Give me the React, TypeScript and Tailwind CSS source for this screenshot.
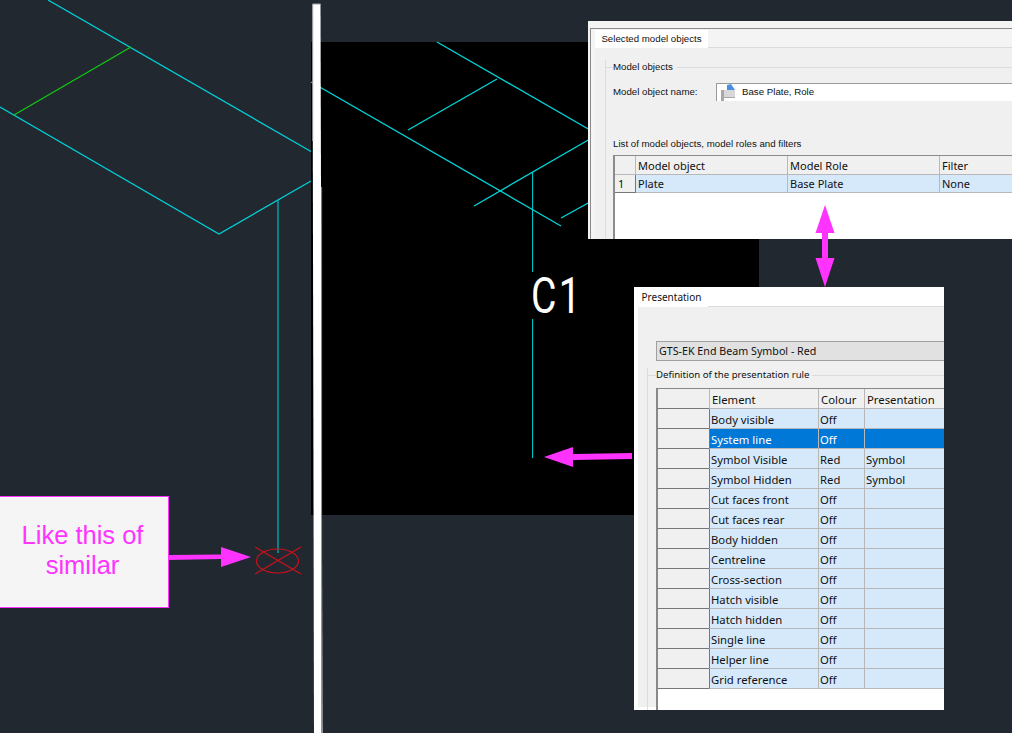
const magenta = "#ff33ff"

const presentationRows = [
  ["Body visible", "Off", ""],
  ["System line", "Off", ""],
  ["Symbol Visible", "Red", "Symbol"],
  ["Symbol Hidden", "Red", "Symbol"],
  ["Cut faces front", "Off", ""],
  ["Cut faces rear", "Off", ""],
  ["Body hidden", "Off", ""],
  ["Centreline", "Off", ""],
  ["Cross-section", "Off", ""],
  ["Hatch visible", "Off", ""],
  ["Hatch hidden", "Off", ""],
  ["Single line", "Off", ""],
  ["Helper line", "Off", ""],
  ["Grid reference", "Off", ""],
]

function LeftDrawing() {
  return (
    <svg className="absolute left-0 top-0" width={1012} height={733} fill="none">
      <g stroke="#00d0d8" strokeWidth={1.3}>
        <path d="M48 0L311 151.5" />
        <path d="M0 107L219 234L311 181" />
        <path d="M278 200V553" stroke="#00b0b8" />
      </g>
      <path d="M14 115L131 47" stroke="#12c812" strokeWidth={1.3} />
      <g stroke="#d0101a" strokeWidth={1.1}>
        <ellipse cx={277.5} cy={561} rx={21} ry={12} />
        <path d="M255 547L301 574M301 547L255 574" />
      </g>
    </svg>
  )
}

function BlackDrawing() {
  return (
    <svg className="absolute left-0 top-0" width={1012} height={733} fill="none">
      <rect x={311} y={42} width={448} height={473} fill="#000" />
      <g stroke="#00d8dc" strokeWidth={1.3}>
        <path d="M437 42L590 130" />
        <path d="M408 130L497 79" />
        <path d="M311 82L561 226" />
        <path d="M474 206L590 139" />
        <path d="M561 218L590 202" />
      </g>
      <path d="M532.6 172V272M532.6 319V458" stroke="#00d8dc" />
      <polygon points="312.5,4 320.5,4 322.5,733 314,733" fill="#fff" />
      <path d="M312.7 4H320.5M312.7 4V141" stroke="#a0a0a0" />
      <path d="M321.6 187V733" stroke="#8a8a8a" />
    </svg>
  )
}

function Arrows() {
  return (
    <svg className="absolute left-0 top-0" width={1012} height={733} fill={magenta}>
      <polygon points="168,555 221,554.5 221,547 251,557 221,567 221,559 168,560" />
      <polygon points="632,453 573,454 573,447 544,457 573,467 573,460 632,459" />
      <polygon points="825,205 834.5,233 828,233 828,258 834.5,258 825,287 815.5,258 822,258 822,233 815.5,233" />
    </svg>
  )
}

function PlateIcon() {
  return (
    <svg width={16} height={17} viewBox="0 0 16 17" className="shrink-0">
      <path d="M1 6H15V14H4V17H1Z" fill="#a8a8a8" />
      <path d="M4 6H15V13H4Z" fill="#d8d8d8" />
      <path d="M7 1L11 0L15 6H7Z" fill="#4a90e2" />
    </svg>
  )
}

function SelectedObjectsWindow() {
  return (
    <div className="absolute left-[588px] top-[21px] h-[218px] w-[424px] overflow-hidden bg-[#f4f4f4] pl-[2px] pt-[7px] font-['Liberation_Sans',sans-serif] text-[9.7px] text-[#111]">
      <div className="h-[400px] border-l border-t border-[#8a8a8a] pl-[4px] pt-[1px]">
        <div className="flex h-[18px] border-b border-[#dcdcdc]">
          <div className="flex h-[18px] w-[113px] items-center justify-center whitespace-nowrap bg-white">Selected model objects</div>
        </div>
        <div className="h-[400px] bg-[#f0f0f0] pl-[10px] pt-[19px]">
          <div className="h-[400px] border-l border-[#dcdcdc]">
            <div className="-mt-[7px] flex h-[14px] items-center">
              <span className="h-px w-[7px] bg-[#dcdcdc]" />
              <span className="pt-[1px]">Model objects</span>
              <span className="ml-[4px] h-px flex-1 bg-[#dcdcdc]" />
            </div>
            <div className="ml-[7px] mt-[9px] flex h-[18px] items-center">
              <span className="w-[103px] whitespace-nowrap">Model object name:</span>
              <div className="flex h-[18px] flex-1 items-center gap-[6px] border-l border-t border-[#9a9a9a] bg-white pl-[3px]">
                <PlateIcon />
                <span>Base Plate, Role</span>
              </div>
            </div>
            <div className="ml-[7px] mt-[35px] h-[14px] pt-[1px] leading-[14px]">List of model objects, model roles and filters</div>
            <div className="ml-[7px] mt-[5px] h-[200px] border-l-2 border-t border-[#8c8c8c] bg-white font-['Noto_Sans',sans-serif] text-[11px]">
              <div className="flex h-[19px] bg-[#f0f0f0] leading-[20px]">
                <div className="w-[21px] border-b border-r border-[#b8b8b8]" />
                <div className="w-[152px] border-b border-r border-[#b8b8b8] pl-[2px]">Model object</div>
                <div className="w-[152px] border-b border-r border-[#b8b8b8] pl-[2px]">Model Role</div>
                <div className="flex-1 border-b border-[#b8b8b8] pl-[2px]">Filter</div>
              </div>
              <div className="flex h-[18px] bg-[#d5e9fb] leading-[18px]">
                <div className="w-[21px] border-b border-r border-[#777] bg-[#f0f0f0] pl-[3px]">1</div>
                <div className="w-[152px] border-b border-r border-[#b8b8b8] pl-[2px]">Plate</div>
                <div className="w-[152px] border-b border-r border-[#b8b8b8] pl-[2px]">Base Plate</div>
                <div className="flex-1 border-b border-[#b8b8b8] pl-[2px]">None</div>
              </div>
            </div>
          </div>
        </div>
      </div>
    </div>
  )
}

function PresentationWindow() {
  return (
    <div className="absolute left-[634px] top-[287px] h-[423px] w-[310px] overflow-hidden bg-white font-['Noto_Sans',sans-serif] text-[11.3px] text-[#111]">
      <div className="ml-[1px] flex h-[20px] border-b border-[#dcdcdc]">
        <div className="flex h-[20px] w-[73px] items-center justify-center bg-white text-[10px]">Presentation</div>
      </div>
      <div className="ml-[4px] h-[400px] bg-[#f0f0f0] pl-[9px] pt-[34px]">
        <div className="ml-[9px] flex h-[20px] items-center border-y border-l border-[#a0a0a0] bg-[#e1e1e1] pl-[2px] text-[10.7px]">GTS-EK End Beam Symbol - Red</div>
        <div className="mt-[14px] h-[400px] border-l border-[#dcdcdc]">
          <div className="-mt-[7px] flex h-[14px] items-center text-[9.6px]">
            <span className="h-px w-[8px] bg-[#dcdcdc]" />
            <span>Definition of the presentation rule</span>
            <span className="ml-[3px] h-px flex-1 bg-[#dcdcdc]" />
          </div>
          <div className="ml-[8px] mt-[6px] h-[400px] border-l-2 border-t border-[#888] bg-white">
            <div className="flex h-[20px] bg-[#f0f0f0] leading-[21px]">
              <div className="w-[51px] border-b border-[#777]" />
              <div className="w-[109px] border-b border-l border-[#b8b8b8] pl-[2px]">Element</div>
              <div className="w-[46px] border-b border-l border-[#b8b8b8] pl-[2px]">Colour</div>
              <div className="flex-1 border-b border-l border-[#b8b8b8] pl-[2px]">Presentation</div>
            </div>
            {presentationRows.map((r) => {
              const selected = r[0] === "System line"
              return (
                <div key={r[0]} className={selected ? "flex h-[20px] bg-[#0078d7] leading-[21px] text-white" : "flex h-[20px] bg-[#d5e9fb] leading-[21px]"}>
                  <div className="w-[51px] border-b border-[#777] bg-[#f0f0f0]" />
                  <div className="w-[109px] border-b border-l border-[#777] border-b-[#b8b8b8] pl-[1px]">{r[0]}</div>
                  <div className="w-[46px] border-b border-l border-[#b8b8b8] pl-[1px]">{r[1]}</div>
                  <div className="flex-1 border-b border-l border-[#b8b8b8] pl-[1px]">{r[2]}</div>
                </div>
              )
            })}
          </div>
        </div>
      </div>
    </div>
  )
}

export default function App() {
  return (
    <div className="relative h-[733px] w-[1012px] overflow-hidden bg-[#212830] font-['Noto_Sans',sans-serif]">
      <LeftDrawing />
      <BlackDrawing />
      <div className="absolute left-[531px] top-[267px] origin-left scale-x-[0.78] font-['Roboto',sans-serif] text-[50px] leading-[58px] tracking-[3px] text-white">C1</div>
      <div className="absolute left-0 top-[496px] flex h-[112px] w-[169px] items-center justify-center border-[1.5px] border-l-0 border-[#ff33ff] bg-[#f5f5f5] pb-[4px] pr-[3px] text-center font-['Liberation_Sans',sans-serif] text-[25.5px] leading-[30px] text-[#ff33ff]">
        <span className="w-[140px]">Like this of similar</span>
      </div>
      <SelectedObjectsWindow />
      <PresentationWindow />
      <Arrows />
    </div>
  )
}
